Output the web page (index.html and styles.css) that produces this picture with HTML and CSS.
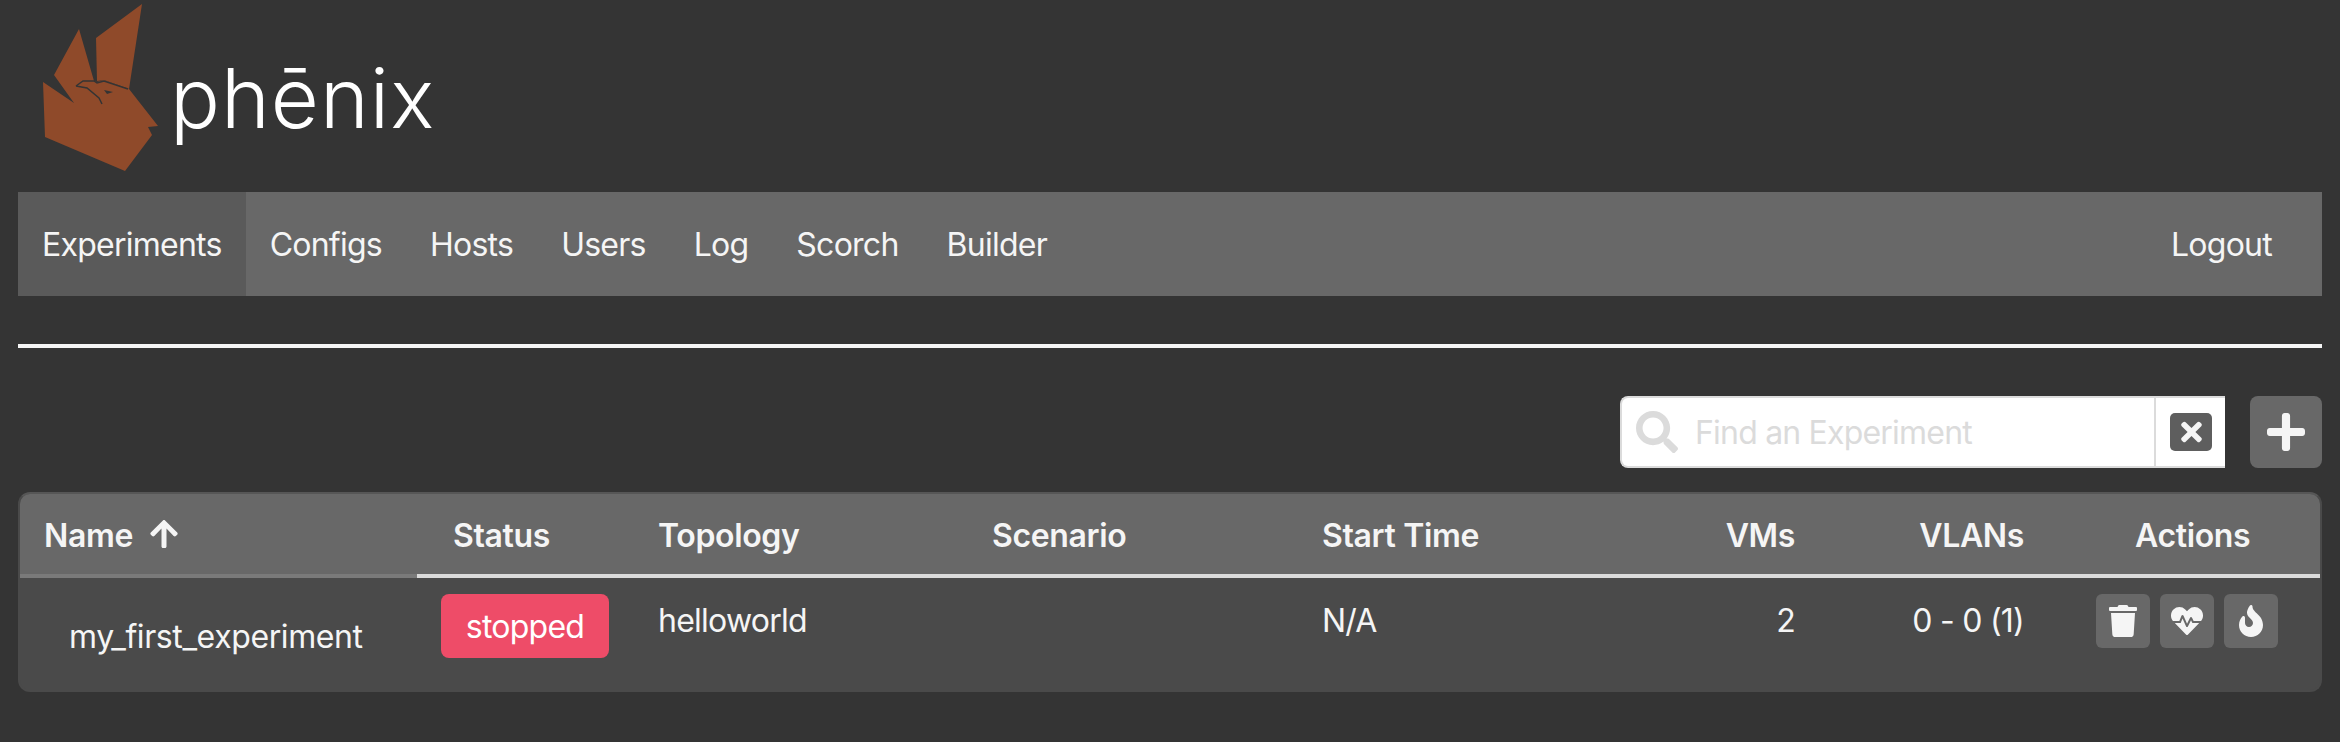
FILE: index.html
```html
<!DOCTYPE html>
<html lang="en">
<head>
  <meta charset="UTF-8">
  <title>phēnix</title>
  <link rel="stylesheet" href="styles.css">
</head>
<body>
  <header class="brand">
    <svg class="logo" viewBox="42 0 126 180" width="126" height="180">
      <path class="logo-fill" d="M142 4L96 38L97 81L104 80L129 89Z"/>
      <path class="logo-fill" d="M43 82L74 103L54 75L79 29L94 81L97 82L104 80L129 89L158 126L148 127L152 135L125 171L45 137Z"/>
      <path class="logo-line" d="M76 86L83 81L94 81L97 83L104 81L128 89M76 86L87 88L99 98L102 104"/>
      <path class="logo-eye" d="M104 90L113 92L107 94Z"/>
    </svg>
    <span class="wordmark">phēnix</span>
  </header>

  <nav class="navbar">
    <a class="nav-item active" href="#">Experiments</a>
    <a class="nav-item" href="#">Configs</a>
    <a class="nav-item" href="#">Hosts</a>
    <a class="nav-item" href="#">Users</a>
    <a class="nav-item" href="#">Log</a>
    <a class="nav-item" href="#">Scorch</a>
    <a class="nav-item" href="#">Builder</a>
    <a class="nav-item logout" href="#">Logout</a>
  </nav>

  <hr class="rule">

  <div class="toolbar">
    <div class="search">
      <svg class="search-icon" viewBox="0 0 512 512"><path d="M505 442.7L405.3 343c-4.5-4.5-10.6-7-17-7H372c27.6-35.3 44-79.7 44-128C416 93.1 322.9 0 208 0S0 93.1 0 208s93.1 208 208 208c48.3 0 92.7-16.4 128-44v16.3c0 6.4 2.5 12.5 7 17l99.7 99.7c9.4 9.4 24.6 9.4 33.9 0l28.3-28.3c9.4-9.4 9.4-24.6.1-34zM208 336c-70.7 0-128-57.2-128-128 0-70.7 57.2-128 128-128 70.7 0 128 57.2 128 128 0 70.7-57.2 128-128 128z"/></svg>
      <input class="search-input" type="text" placeholder="Find an Experiment">
      <div class="search-clear">
        <button class="clear-btn">
          <svg viewBox="0 0 352 512" width="21" height="30"><path d="M242.72 256l100.07-100.07c12.28-12.28 12.28-32.19 0-44.48l-22.24-22.24c-12.28-12.28-32.19-12.28-44.48 0L176 189.28 75.93 89.21c-12.28-12.28-32.19-12.28-44.48 0L9.21 111.45c-12.28 12.28-12.28 32.19 0 44.48L109.28 256 9.21 356.07c-12.28 12.28-12.28 32.19 0 44.48l22.24 22.24c12.28 12.28 32.2 12.28 44.48 0L176 322.72l100.07 100.07c12.28 12.28 32.2 12.28 44.48 0l22.24-22.24c12.28-12.28 12.28-32.19 0-44.48L242.72 256z"/></svg>
        </button>
      </div>
    </div>
    <button class="add-btn">
      <svg viewBox="0 0 448 512" width="38" height="44"><path d="M416 208H272V64c0-17.67-14.33-32-32-32h-32c-17.67 0-32 14.33-32 32v144H32c-17.67 0-32 14.33-32 32v32c0 17.67 14.33 32 32 32h144v144c0 17.67 14.33 32 32 32h32c17.67 0 32-14.33 32-32V304h144c17.67 0 32-14.33 32-32v-32c0-17.67-14.33-32-32-32z"/></svg>
    </button>
  </div>

  <div class="table-wrap">
    <table class="experiments">
      <colgroup>
        <col class="col-name">
        <col class="col-status">
        <col class="col-topology">
        <col class="col-scenario">
        <col class="col-start">
        <col class="col-vms">
        <col class="col-vlans">
        <col>
      </colgroup>
      <thead>
        <tr>
          <th class="sorted">Name
            <svg class="sort-icon" viewBox="0 0 448 512" width="28" height="32"><path d="M34.9 289.5l-22.2-22.2c-9.4-9.4-9.4-24.6 0-33.9L207 39c9.4-9.4 24.6-9.4 33.9 0l194.3 194.3c9.4 9.4 9.4 24.6 0 33.9L413 289.4c-9.5 9.5-25 9.3-34.3-.4L264 168.6V456c0 13.3-10.7 24-24 24h-32c-13.3 0-24-10.7-24-24V168.6L69.2 289.1c-9.3 9.8-24.8 10-34.3.4z"/></svg>
          </th>
          <th class="status-head">Status</th>
          <th>Topology</th>
          <th>Scenario</th>
          <th>Start Time</th>
          <th class="num">VMs</th>
          <th class="num">VLANs</th>
          <th class="actions-head">Actions</th>
        </tr>
      </thead>
      <tbody>
        <tr>
          <td class="name-cell">my_first_experiment</td>
          <td><span class="tag">stopped</span></td>
          <td>helloworld</td>
          <td></td>
          <td>N/A</td>
          <td class="num">2</td>
          <td class="num">0 - 0 (1)</td>
          <td class="actions-cell">
            <div class="actions">
              <button class="action-btn"><svg viewBox="0 0 448 512" width="28" height="32"><path d="M432 32H312l-9.4-18.7A24 24 0 0 0 281.1 0H166.8a23.72 23.72 0 0 0-21.4 13.3L136 32H16A16 16 0 0 0 0 48v32a16 16 0 0 0 16 16h416a16 16 0 0 0 16-16V48a16 16 0 0 0-16-16zM53.2 467a48 48 0 0 0 47.9 45h245.8a48 48 0 0 0 47.9-45L416 128H32z"/></svg></button>
              <button class="action-btn"><svg viewBox="0 0 512 512" width="32" height="32"><path d="M320.2 243.8l-49.7 99.4c-6 12.1-23.4 11.7-28.9-.6l-56.9-126.3-30 71.7H60.6l182.5 186.5c7.1 7.3 18.6 7.3 25.7 0L451.4 288H342.3l-22.1-44.2zM473.7 73.9l-2.4-2.5c-51.5-52.6-135.8-52.6-187.4 0L256 100l-27.9-28.5c-51.5-52.7-135.9-52.7-187.4 0l-2.4 2.4C-10.4 123.7-12.5 203 31 256h102.4l35.9-86.2c5.4-12.9 23.6-13.2 29.4-.4l58.2 129.3 49-97.9c5.9-11.8 22.7-11.8 28.6 0l27.6 55.2H481c43.5-53 41.4-132.3-7.3-182.1z"/></svg></button>
              <button class="action-btn"><svg viewBox="0 0 384 512" width="24" height="32"><path d="M216 23.86c0-23.8-30.65-32.77-44.15-13.04C48 191.85 224 200 224 288c0 35.63-29.11 64.46-64.85 63.99-35.17-.45-63.15-29.77-63.15-64.94v-85.51c0-21.7-26.47-32.23-41.43-16.5C27.8 213.16 0 261.33 0 320c0 105.87 86.13 192 192 192s192-86.13 192-192c0-170.29-168-193-168-296.14z"/></svg></button>
            </div>
          </td>
        </tr>
      </tbody>
    </table>
  </div>
</body>
</html>
```

FILE: styles.css
```css
body {
  margin: 0;
  padding: 0 18px;
  background-color: #343434;
  color: #f5f5f5;
  font-family: Inter, "Noto Sans", sans-serif;
  font-size: 32px;
  line-height: 50px;
  letter-spacing: -0.75px;
}
svg {
  display: block;
  fill: currentColor;
}
button {
  border: none;
  padding: 0;
  display: flex;
  align-items: center;
  justify-content: center;
  color: #f5f5f5;
}

/* logo */
.brand {
  height: 192px;
  display: flex;
  align-items: flex-start;
  padding-left: 24px;
  box-sizing: border-box;
}
.logo {
  flex: none;
}
.logo-fill {
  fill: #8f4a2a;
}
.logo-line {
  fill: none;
  stroke: #343434;
  stroke-width: 1.5;
}
.logo-eye {
  fill: #343434;
}
.wordmark {
  margin-left: 2px;
  margin-top: 42px;
  font-weight: 300;
  font-size: 83px;
  line-height: 112px;
  letter-spacing: 1px;
  color: #fff;
}

/* nav */
.navbar {
  display: flex;
  height: 104px;
  background-color: #686868;
}
.nav-item {
  display: flex;
  align-items: center;
  padding: 2px 24px 0;
  color: #f5f5f5;
  text-decoration: none;
}
.nav-item.active {
  background-color: #5a5a5a;
}
.logout {
  margin-left: auto;
  margin-right: 26px;
}
.rule {
  height: 4px;
  margin: 48px 0;
  border: none;
  background-color: #f5f5f5;
}

/* search row */
.toolbar {
  display: flex;
  justify-content: flex-end;
  gap: 25px;
  margin-bottom: 24px;
}
.search {
  width: 605px;
  height: 72px;
  box-sizing: border-box;
  display: flex;
  align-items: center;
  background-color: #fff;
  border: 2px solid #dbdbdb;
  border-right: none;
  border-radius: 8px 0 0 8px;
}
.search-icon {
  flex: none;
  width: 42px;
  height: 42px;
  margin-left: 14px;
  color: #dbdbdb;
}
.search-input {
  flex: 1;
  min-width: 0;
  border: none;
  outline: none;
  margin-left: 17px;
  padding: 0;
  font-family: inherit;
  font-size: 32px;
  letter-spacing: -0.8px;
  background: transparent;
}
.search-input::placeholder {
  color: #dbdbdb;
  opacity: 1;
}
.search-clear {
  flex: none;
  width: 71px;
  height: 100%;
  box-sizing: border-box;
  border-left: 2px solid #dbdbdb;
  display: flex;
  align-items: center;
  padding-left: 14px;
}
.clear-btn {
  width: 42px;
  height: 38px;
  background-color: #5e5e5e;
  border-radius: 5px;
}
.add-btn {
  width: 72px;
  height: 72px;
  background-color: #686868;
  border-radius: 8px;
}

/* table */
.table-wrap {
  background-color: #4a4a4a;
  border: 2px solid #4a4a4a;
  border-top-color: #565656;
  border-radius: 12px;
  overflow: hidden;
  height: 200px;
  box-sizing: border-box;
}
.experiments {
  width: 100%;
  table-layout: fixed;
  border-collapse: separate;
  border-spacing: 0;
}
.col-name { width: 397px; }
.col-status { width: 217px; }
.col-topology { width: 334px; }
.col-scenario { width: 330px; }
.col-start { width: 302px; }
.col-vms { width: 219px; }
.col-vlans { width: 229px; }
th, td {
  padding: 16px 24px;
  vertical-align: top;
  text-align: left;
}
td {
  line-height: 54px;
}
th {
  height: 84px;
  box-sizing: border-box;
  padding: 17px 24px 13px;
  font-weight: 600;
  letter-spacing: -0.35px;
  background-color: #686868;
  border-bottom: 4px solid #dbdbdb;
}
th.sorted {
  border-bottom-color: #7a7a7a;
  white-space: nowrap;
}
.sort-icon {
  display: inline-block;
  vertical-align: -3px;
  margin-left: 9px;
}
th.status-head {
  padding-left: 36px;
}
th.actions-head {
  padding-left: 87px;
  padding-right: 0;
}
.num {
  text-align: right;
}
.name-cell {
  padding-left: 49px;
  padding-top: 32px;
  letter-spacing: -0.4px;
}
.tag {
  display: block;
  width: 168px;
  height: 64px;
  line-height: 66px;
  text-align: center;
  background-color: #ee4c68;
  border-radius: 8px;
  color: #fff;
}
.actions-cell {
  padding-left: 48px;
  padding-right: 0;
}
.actions {
  display: flex;
  gap: 10px;
}
.action-btn {
  flex: none;
  width: 54px;
  height: 54px;
  background-color: #686868;
  border-radius: 6px;
}
```
